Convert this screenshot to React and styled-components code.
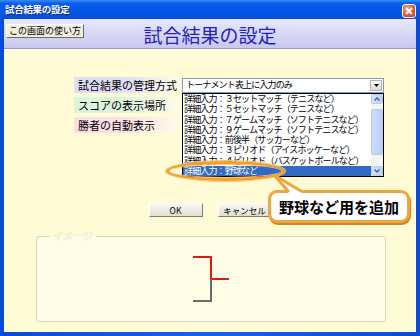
import React from "react";
import styled, { createGlobalStyle } from "styled-components";

const jp = `"Noto Sans CJK JP", "Noto Sans", sans-serif`;

const GlobalStyle = createGlobalStyle`
  html, body { margin: 0; padding: 0; }
  body {
    width: 420px;
    height: 336px;
    overflow: hidden;
    font-family: ${jp};
  }
`;

const options = [
  "詳細入力：３セットマッチ（テニスなど）",
  "詳細入力：５セットマッチ（テニスなど）",
  "詳細入力：７ゲームマッチ（ソフトテニスなど）",
  "詳細入力：９ゲームマッチ（ソフトテニスなど）",
  "詳細入力：前後半（サッカーなど）",
  "詳細入力：３ピリオド（アイスホッケーなど）",
  "詳細入力：４ピリオド（バスケットボールなど）",
  "詳細入力：野球など",
];

const labels = [
  { text: "試合結果の管理方式", tint: "#dedef8" },
  { text: "スコアの表示場所", tint: "#dcf4dc" },
  { text: "勝者の自動表示", tint: "#fbdfe4" },
];

const Frame = styled.div`
  width: 420px;
  height: 336px;
  display: flex;
  flex-direction: column;
  background: linear-gradient(90deg, #0a4ad8, #1462f2 50%, #0a4ad8);
`;

const TitleBar = styled.div`
  height: 19px;
  flex: none;
  display: flex;
  align-items: flex-start;
  justify-content: space-between;
  padding: 0 4px 0 5px;
  background: linear-gradient(#3a8af8 0%, #0c5eec 18%, #0656e6 60%, #0a4cd6 100%);
`;

const TitleText = styled.span`
  color: #fff;
  font-size: 9.5px;
  line-height: 19px;
  font-weight: bold;
  letter-spacing: -0.3px;
  text-shadow: 1px 1px 0 #0a2c90;
`;

const CloseBtn = styled.div`
  width: 14px;
  height: 14px;
  margin-top: 4px;
  box-sizing: border-box;
  border: 1px solid #fff;
  border-radius: 3px;
  background: radial-gradient(circle at 35% 30%, #f6a888, #e25a34 55%, #c43c18);
  display: flex;
  align-items: center;
  justify-content: center;
`;

const Client = styled.div`
  flex: 1;
  min-height: 0;
  margin: 0 4px 4px;
  display: flex;
  flex-direction: column;
`;

const Header = styled.div`
  height: 29px;
  flex: none;
  border-bottom: 1px solid #9898d6;
  background: linear-gradient(#e8e8fc, #c8c8f0);
  display: grid;
  grid-template-columns: 1fr auto 1fr;
  align-items: start;
`;

const HelpButton = styled.div`
  justify-self: start;
  margin: 5px 0 0 2px;
  height: 14px;
  padding: 0 2px;
  box-sizing: border-box;
  background: #f2eedc;
  border: 1px solid;
  border-color: #ffffff #6a6a6a #6a6a6a #ffffff;
  font-size: 9px;
  line-height: 12px;
  color: #000;
  white-space: nowrap;
`;

const BigTitle = styled.div`
  margin-top: 5px;
  font-size: 19px;
  line-height: 22px;
  color: #2222c4;
`;

const Body = styled.div`
  flex: 1;
  min-height: 0;
  position: relative;
  background: #fffbd4;
  display: flex;
  flex-direction: column;
  padding: 28px 0 10px;
  box-sizing: border-box;
`;

const Form = styled.div`
  margin-left: 70px;
  display: grid;
  grid-template-columns: 106px 202px;
  grid-auto-rows: 16px;
  column-gap: 2px;
  row-gap: 4px;
`;

const Label = styled.div`
  background: linear-gradient(90deg, ${(p) => p.$tint} 0%, ${(p) => p.$tint} 45%, #fffbe8 100%);
  font-size: 11px;
  line-height: 16px;
  padding-left: 4px;
  color: #000;
  white-space: nowrap;
`;

const Cell = styled.div`
  position: relative;
`;

const Select = styled.div`
  margin-top: 1px;
  height: 15px;
  box-sizing: border-box;
  border: 1px solid #7f9db9;
  background: #fff;
  display: flex;
  align-items: center;
  justify-content: space-between;
`;

const SmallText = styled.span`
  font-size: 9px;
  line-height: 10.25px;
  letter-spacing: -0.85px;
  white-space: nowrap;
  color: ${(p) => (p.$light ? "#fff" : "#000")};
`;

const ArrowBtn = styled.div`
  width: 12px;
  height: 11px;
  margin-right: 1px;
  background: linear-gradient(#f8f8f4, #dcdad0);
  border: 1px solid #b8b6aa;
  box-sizing: border-box;
  display: flex;
  align-items: center;
  justify-content: center;
`;

const ListBox = styled.div`
  position: absolute;
  left: 0;
  top: 16px;
  width: 202px;
  box-sizing: border-box;
  border: 1px solid #000;
  background: #fff;
  display: flex;
  z-index: 2;
`;

const Items = styled.div`
  flex: 1;
  min-width: 0;
  display: flex;
  flex-direction: column;
`;

const Item = styled.div`
  height: 10.25px;
  padding-left: 1px;
  display: flex;
  align-items: center;
  background: ${(p) => (p.$selected ? "#316ac5" : "transparent")};
`;

const ScrollBar = styled.div`
  width: 12px;
  display: flex;
  flex-direction: column;
  justify-content: space-between;
  background: #f4f4f0;
`;

const ScrollArrow = styled.div`
  height: 10px;
  background: linear-gradient(90deg, #d4e2fc, #bcd0f6);
  border: 1px solid #b8ccf2;
  border-radius: 2px;
  box-sizing: border-box;
  display: flex;
  align-items: center;
  justify-content: center;
`;

const Thumb = styled.div`
  height: 44px;
  margin: 0 0 6px;
  background: linear-gradient(90deg, #cedcfa, #bcd0f8);
  border: 1px solid #b4c8f0;
  border-radius: 2px;
`;

const Buttons = styled.div`
  margin-top: 70px;
  display: flex;
  justify-content: center;
  gap: 15px;
`;

const Button = styled.div`
  width: 54px;
  height: 14px;
  box-sizing: border-box;
  background: linear-gradient(#f8f6f0, #e2dfd2);
  border: 1px solid;
  border-color: #ffffff #7c7c7c #7c7c7c #ffffff;
  font-size: 8.5px;
  line-height: 12px;
  text-align: center;
  color: #000;
`;

const Group = styled.fieldset`
  flex: 1;
  margin: 14px 30px 0 32px;
  padding: 0 0 4px;
  border: 1px solid #d6d2bc;
  border-radius: 3px;
  background: #fffde6;
  display: flex;
  align-items: center;
  justify-content: center;
  min-width: 0;
`;

const Legend = styled.legend`
  margin-left: 13px;
  padding: 0 3px;
  font-size: 10px;
  line-height: 10px;
  color: #fffef6;
  text-shadow: 0 0 1px #b8b4a0;
`;

const Ellipse = styled.div`
  position: absolute;
  left: 162px;
  top: 112px;
  width: 119px;
  height: 20px;
  box-sizing: border-box;
  border: 3px solid #f2a030;
  border-radius: 50%;
  box-shadow: 0 0 0 1px #f8c878, inset 0 0 0 1px #f8c878;
  z-index: 3;
`;

const Tail = styled.svg`
  position: absolute;
  left: 266px;
  top: 125px;
  z-index: 5;
`;

const Callout = styled.div`
  position: absolute;
  left: 264px;
  top: 141px;
  width: 142px;
  height: 33px;
  box-sizing: border-box;
  background: #fff;
  border: 3px solid #f2a53a;
  border-radius: 9px;
  box-shadow: 1px 2px 0 #c98a24;
  display: flex;
  align-items: center;
  justify-content: center;
  font-size: 15px;
  font-weight: bold;
  color: #000;
  z-index: 4;
`;

export default function App() {
  return (
    <>
      <GlobalStyle />
      <Frame>
        <TitleBar>
          <TitleText>試合結果の設定</TitleText>
          <CloseBtn>
            <svg width="8" height="8" viewBox="0 0 8 8">
              <path d="M1 1L7 7M7 1L1 7" stroke="#fff" strokeWidth="1.8" />
            </svg>
          </CloseBtn>
        </TitleBar>
        <Client>
          <Header>
            <HelpButton>この画面の使い方</HelpButton>
            <BigTitle>試合結果の設定</BigTitle>
            <div />
          </Header>
          <Body>
            <Form>
              {labels.map((l, i) => (
                <React.Fragment key={l.text}>
                  <Label $tint={l.tint}>{l.text}</Label>
                  <Cell>
                    {i === 0 && (
                      <>
                        <Select>
                          <SmallText style={{ paddingLeft: 3 }}>トーナメント表上に入力のみ</SmallText>
                          <ArrowBtn>
                            <svg width="5" height="3" viewBox="0 0 5 3">
                              <path d="M0 0H5L2.5 3Z" fill="#000" />
                            </svg>
                          </ArrowBtn>
                        </Select>
                        <ListBox>
                          <Items>
                            {options.map((o, k) => (
                              <Item key={o} $selected={k === options.length - 1}>
                                <SmallText $light={k === options.length - 1}>{o}</SmallText>
                              </Item>
                            ))}
                          </Items>
                          <ScrollBar>
                            <ScrollArrow>
                              <svg width="6" height="4" viewBox="0 0 6 4">
                                <path d="M0.5 3.5L3 1L5.5 3.5" stroke="#4d6185" strokeWidth="1.3" fill="none" />
                              </svg>
                            </ScrollArrow>
                            <Thumb />
                            <ScrollArrow>
                              <svg width="6" height="4" viewBox="0 0 6 4">
                                <path d="M0.5 0.5L3 3L5.5 0.5" stroke="#4d6185" strokeWidth="1.3" fill="none" />
                              </svg>
                            </ScrollArrow>
                          </ScrollBar>
                        </ListBox>
                      </>
                    )}
                  </Cell>
                </React.Fragment>
              ))}
            </Form>
            <Buttons>
              <Button>OK</Button>
              <Button>キャンセル</Button>
            </Buttons>
            <Group>
              <Legend>イメージ</Legend>
              <svg width="38" height="47" viewBox="0 0 38 47">
                <path d="M1 1H19V23H37" stroke="#e01818" strokeWidth="2" fill="none" />
                <path d="M19 23V45H1" stroke="#6c6c64" strokeWidth="2" fill="none" />
              </svg>
            </Group>
            <Ellipse />
            <Tail width="34" height="20" viewBox="0 0 34 20">
              <path d="M4 1L18 19H32Z" fill="#fff" />
              <path d="M4 1L18 17M4 1L31 17" stroke="#f2a53a" strokeWidth="3" fill="none" strokeLinecap="round" />
            </Tail>
            <Callout>野球など用を追加</Callout>
          </Body>
        </Client>
      </Frame>
    </>
  );
}
